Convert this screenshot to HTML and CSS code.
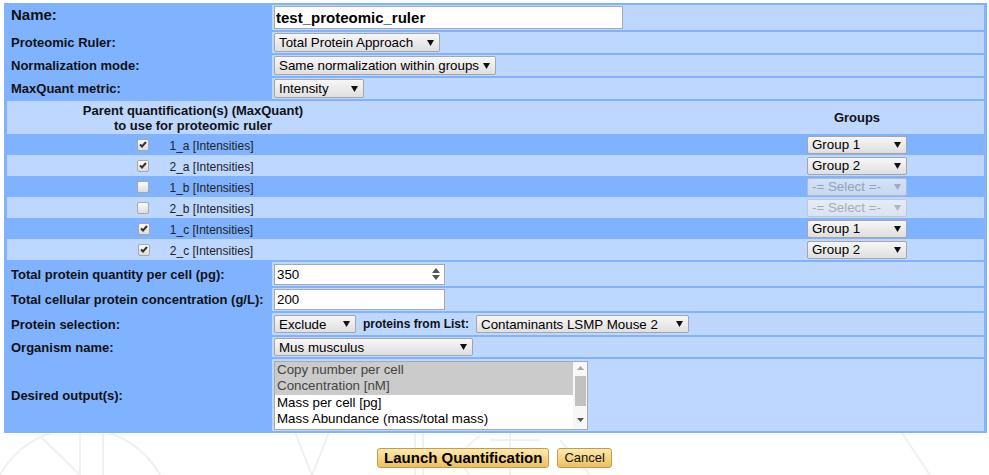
FILE: index.html
```html
<!DOCTYPE html>
<html>
<head>
<meta charset="utf-8">
<title>Proteomic Ruler</title>
<link rel="stylesheet" href="styles.css">
</head>
<body>
<svg class="watermark" width="989" height="475" viewBox="0 0 989 475">
  <g fill="none" stroke="#f0f0f0" stroke-width="2">
    <circle cx="80" cy="520" r="92"/>
    <line x1="40" y1="436" x2="80" y2="475"/>
    <line x1="80" y1="420" x2="80" y2="475"/>
    <line x1="103" y1="420" x2="103" y2="475"/>
    <line x1="290" y1="420" x2="312" y2="475"/>
    <line x1="334" y1="420" x2="312" y2="475"/>
    <line x1="415" y1="420" x2="415" y2="475"/>
    <line x1="423" y1="420" x2="423" y2="475"/>
    <path d="M480 436 Q450 455 470 475"/>
    <line x1="490" y1="440" x2="540" y2="440"/>
    <line x1="510" y1="420" x2="510" y2="475"/>
    <line x1="560" y1="440" x2="590" y2="475"/>
    <line x1="900" y1="430" x2="930" y2="475"/>
  </g>
</svg>

<form class="form">
  <div class="row r-name">
    <div class="label label-name">Name:</div>
    <div class="value"><input class="txt-name" type="text" value="test_proteomic_ruler"></div>
  </div>
  <div class="row r-std">
    <div class="label">Proteomic Ruler:</div>
    <div class="value"><select class="sel w-ruler"><option>Total Protein Approach</option></select></div>
  </div>
  <div class="row r-std">
    <div class="label">Normalization mode:</div>
    <div class="value"><select class="sel w-norm"><option>Same normalization within groups</option></select></div>
  </div>
  <div class="row r-std">
    <div class="label">MaxQuant metric:</div>
    <div class="value"><select class="sel w-metric"><option>Intensity</option></select></div>
  </div>

  <div class="groups">
    <div class="ghead">
      <div>Parent quantification(s) (MaxQuant)<br>to use for proteomic ruler</div>
      <div></div>
      <div>Groups</div>
    </div>
    <div class="grow">
      <div class="gcell"><input class="cb" type="checkbox" checked><span>1_a [Intensities]</span></div>
      <div></div>
      <div class="gsel"><select class="sel w-group"><option>Group 1</option></select></div>
    </div>
    <div class="grow light">
      <div class="gcell"><input class="cb" type="checkbox" checked><span>2_a [Intensities]</span></div>
      <div></div>
      <div class="gsel"><select class="sel w-group"><option>Group 2</option></select></div>
    </div>
    <div class="grow">
      <div class="gcell"><input class="cb" type="checkbox"><span>1_b [Intensities]</span></div>
      <div></div>
      <div class="gsel"><select class="sel w-group" disabled><option>-= Select =-</option></select></div>
    </div>
    <div class="grow light">
      <div class="gcell"><input class="cb" type="checkbox"><span>2_b [Intensities]</span></div>
      <div></div>
      <div class="gsel"><select class="sel w-group" disabled><option>-= Select =-</option></select></div>
    </div>
    <div class="grow">
      <div class="gcell"><input class="cb" type="checkbox" checked><span>1_c [Intensities]</span></div>
      <div></div>
      <div class="gsel"><select class="sel w-group"><option>Group 1</option></select></div>
    </div>
    <div class="grow light">
      <div class="gcell"><input class="cb" type="checkbox" checked><span>2_c [Intensities]</span></div>
      <div></div>
      <div class="gsel"><select class="sel w-group"><option>Group 2</option></select></div>
    </div>
  </div>

  <div class="row r-in1">
    <div class="label">Total protein quantity per cell (pg):</div>
    <div class="value">
      <span class="num"><input class="num-input" type="text" value="350"><svg class="spin" width="8" height="12" viewBox="0 0 8 12"><path d="M4 0L8 5H0Z M0 7H8L4 12Z" fill="#555"/></svg></span>
    </div>
  </div>
  <div class="row r-in2">
    <div class="label">Total cellular protein concentration (g/L):</div>
    <div class="value"><span class="num"><input class="num-input" type="text" value="200"></span></div>
  </div>
  <div class="row r-sel">
    <div class="label">Protein selection:</div>
    <div class="value">
      <select class="sel w-excl"><option>Exclude</option></select>
      <span class="inline-label">proteins from List:</span>
      <select class="sel w-list"><option>Contaminants LSMP Mouse 2</option></select>
    </div>
  </div>
  <div class="row r-org">
    <div class="label">Organism name:</div>
    <div class="value"><select class="sel sel-sm w-org"><option>Mus musculus</option></select></div>
  </div>
  <div class="row r-out">
    <div class="label">Desired output(s):</div>
    <div class="value">
      <div class="listbox">
        <div class="opts">
          <div class="opt selected">Copy number per cell</div>
          <div class="opt selected">Concentration [nM]</div>
          <div class="opt">Mass per cell [pg]</div>
          <div class="opt">Mass Abundance (mass/total mass)</div>
        </div>
        <div class="sbar">
          <svg width="7" height="4" viewBox="0 0 7 4"><path d="M3.5 0L7 4H0Z" fill="#a8a8a8"/></svg>
          <div class="sb-track"><div class="sb-thumb"></div></div>
          <svg width="7" height="4" viewBox="0 0 7 4"><path d="M0 0H7L3.5 4Z" fill="#555"/></svg>
        </div>
      </div>
    </div>
  </div>
</form>

<div class="actions">
  <button class="btn btn-main" type="button">Launch Quantification</button>
  <button class="btn btn-cancel" type="button">Cancel</button>
</div>
</body>
</html>
```

FILE: styles.css
```css
* { box-sizing: border-box; }
html, body { margin: 0; padding: 0; }
body {
  font-family: "Liberation Sans", Arial, sans-serif;
  color: #111;
  background: #fff;
  width: 989px;
  height: 475px;
  overflow: hidden;
  position: relative;
}
.watermark { position: absolute; left: 0; top: 0; z-index: -1; }

.form {
  margin: 3px 0 0 4px;
  width: 983px;
  background: #80b3ff;
  padding: 2px 3px;
  display: flex;
  flex-direction: column;
  gap: 2px;
}
.row {
  display: grid;
  grid-template-columns: 263px 1fr;
  column-gap: 2px;
}
.r-name { height: 25px; }
.r-std { height: 21px; }
.r-in1 { height: 24px; }
.r-in2 { height: 23px; }
.r-sel { height: 22px; }
.r-org { height: 20px; }
.r-out { height: 72px; }

.label {
  font-weight: bold;
  font-size: 13px;
  padding-left: 4px;
  display: flex;
  align-items: center;
  color: #111;
  white-space: nowrap;
}
.label-name { font-size: 15px; align-items: flex-start; padding-top: 1px; }
.value {
  background: #bdd7ff;
  display: flex;
  align-items: center;
  padding-left: 2px;
  gap: 7px;
}

.txt-name {
  width: 349px;
  height: 23px;
  border: 1px solid #a9a9a9;
  padding: 0 1px;
  font: bold 15px "Liberation Sans", Arial, sans-serif;
  color: #000;
  background: #fff;
}

.sel {
  -webkit-appearance: none;
  appearance: none;
  height: 19px;
  border: 1px solid #a6a6a6;
  border-radius: 2px;
  padding: 0 14px 0 4px;
  font: 13.333px "Liberation Sans", Arial, sans-serif;
  color: #000;
  background:
    url("data:image/svg+xml,%3Csvg xmlns='http://www.w3.org/2000/svg' width='7' height='6'%3E%3Cpath d='M0 0H7L3.5 6Z' fill='%23111'/%3E%3C/svg%3E") no-repeat right 5px center,
    linear-gradient(#f7f7f7, #dfdfdf);
}
.sel:disabled {
  color: #9c9c9c;
  border-color: #c2c2c2;
  background:
    url("data:image/svg+xml,%3Csvg xmlns='http://www.w3.org/2000/svg' width='7' height='6'%3E%3Cpath d='M0 0H7L3.5 6Z' fill='%23aaa'/%3E%3C/svg%3E") no-repeat right 5px center,
    linear-gradient(#f6f6f6, #e8e8e8);
}
.sel-sm { height: 18px; }
.w-ruler { width: 166px; }
.w-norm { width: 222px; }
.w-metric { width: 90px; }
.w-group { width: 100px; height: 18px; }
.w-excl { width: 82px; height: 18px; }
.w-list { width: 213px; height: 18px; }
.w-org { width: 199px; }

.groups { display: flex; flex-direction: column; }
.ghead, .grow {
  display: grid;
  grid-template-columns: 372px 1fr 254px;
  align-items: center;
}
.ghead {
  height: 33px;
  background: #bdd7ff;
  font-weight: bold;
  font-size: 13px;
  line-height: 15px;
  text-align: center;
  color: #111;
}
.grow { height: 21px; }
.grow.light { background: #bdd7ff; }
.gcell {
  display: flex;
  justify-content: center;
  align-items: center;
  gap: 20px;
  padding-left: 5px;
  font-size: 12px;
  color: #222;
}
.gcell span { padding-top: 3px; }
.gsel { display: flex; justify-content: center; }

.cb {
  -webkit-appearance: none;
  appearance: none;
  margin: 0 0 0 0;
  width: 12px;
  height: 12px;
  border: 1px solid #a8a8a8;
  border-radius: 2px;
  background: linear-gradient(#fbfbfb, #dcdcdc);
}
.cb:checked {
  background:
    url("data:image/svg+xml,%3Csvg xmlns='http://www.w3.org/2000/svg' width='8' height='7'%3E%3Cpath d='M1 3.5L3 5.5L7 1' fill='none' stroke='%23333' stroke-width='2'/%3E%3C/svg%3E") no-repeat center,
    linear-gradient(#fbfbfb, #dcdcdc);
}

.num {
  display: flex;
  align-items: center;
  width: 171px;
  height: 21px;
  border: 1px solid #a9a9a9;
  background: #fff;
}
.num-input {
  flex: 1;
  min-width: 0;
  height: 100%;
  border: none;
  padding: 0 2px;
  font: 13.333px "Liberation Sans", Arial, sans-serif;
  color: #000;
  background: transparent;
}
.spin { margin-right: 4px; flex: none; }

.inline-label {
  font-weight: bold;
  font-size: 12px;
  color: #111;
}

.listbox {
  display: flex;
  width: 314px;
  height: 69px;
  border: 1px solid #a9a9a9;
  background: #fff;
}
.opts { flex: 1; }
.opt {
  height: 16.5px;
  line-height: 16.5px;
  padding-left: 2px;
  font-size: 13.333px;
  color: #000;
  white-space: nowrap;
}
.opt.selected { background: #cbcbcb; color: #444; }
.sbar {
  width: 14px;
  display: flex;
  flex-direction: column;
  align-items: center;
  padding: 4px 0 7px;
  background: #f7f7f7;
}
.sb-track { flex: 1; width: 100%; padding: 6px 1px 0 2px; }
.sb-thumb { height: 30px; background: #c1c1c1; }

.actions {
  display: flex;
  justify-content: center;
  gap: 8px;
  margin-top: 15px;
}
.btn {
  height: 20px;
  border: 1px solid #c79b47;
  border-radius: 3px;
  background: linear-gradient(#fdeab0, #edbf5c);
  padding: 0 6px;
  font-family: "Liberation Sans", Arial, sans-serif;
  color: #000;
  line-height: 18px;
}
.btn-main { font-weight: bold; font-size: 15px; }
.btn-cancel { font-size: 13px; color: #111; }
```
